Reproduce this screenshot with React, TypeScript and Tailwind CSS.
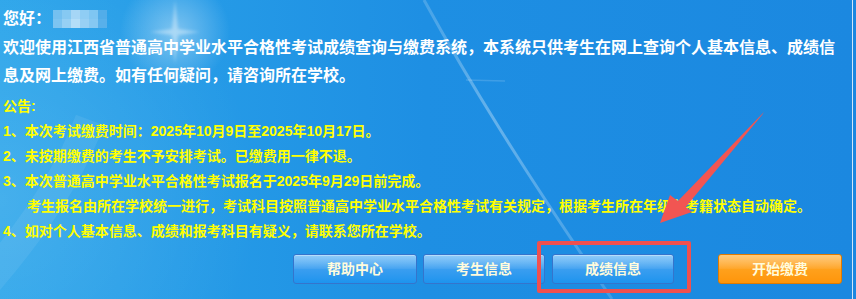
import React from 'react';

const FONT = { fontFamily: '"Liberation Sans", "Noto Sans CJK SC", sans-serif' };

const notices = [
  { text: '1、本次考试缴费时间：2025年10月9日至2025年10月17日。' },
  { text: '2、未按期缴费的考生不予安排考试。已缴费用一律不退。' },
  { text: '3、本次普通高中学业水平合格性考试报名于2025年9月29日前完成。' },
  { text: '考生报名由所在学校统一进行，考试科目按照普通高中学业水平合格性考试有关规定，根据考生所在年级和考籍状态自动确定。', indent: true },
  { text: '4、如对个人基本信息、成绩和报考科目有疑义，请联系您所在学校。' },
];

// pixelated, blurred name placeholder
const blurCells = [
  ['#74c0f0', '#86c9f2', '#a6d6f6', '#8fcdf4', '#7fc6f2', '#52ade9'],
  ['#7cc4f1', '#96d0f4', '#b4def8', '#98d0f4', '#86c8f2', '#58b0ea'],
];

const BlueButton: React.FC<{ label: string; className?: string }> = ({ label, className }) => (
  <button
    className={`relative h-[30px] w-[122px] overflow-hidden rounded-[3px] border border-[#3574cc] bg-gradient-to-b from-[#6cbcf7] via-[#3a9ef0] to-[#1c94ee] text-[14px] font-bold text-[#fffbdc] shadow-[inset_0_1px_0_rgba(255,255,255,0.35)] ${className ?? ''}`}
  >
    <span className="absolute inset-x-0 top-0 h-1/2 bg-gradient-to-b from-white/25 to-white/5" />
    <span className="relative">{label}</span>
  </button>
);

export default function App() {
  return (
    <div className="flex h-[299px] w-[856px] overflow-hidden bg-[#1b87e0]" style={FONT}>
      <div className="relative h-full w-[853px] border-r border-[#cfe6f9] bg-gradient-to-r from-[#2ca5ea] via-[#1e8fe3] to-[#1b88e0]">
        {/* background decorations */}
        <svg className="pointer-events-none absolute inset-0" width="852" height="299">
          <defs>
            <radialGradient id="glow" cx="175" cy="32" r="55" gradientUnits="userSpaceOnUse">
              <stop offset="0" stopColor="#ffffff" stopOpacity="0.4" />
              <stop offset="1" stopColor="#ffffff" stopOpacity="0" />
            </radialGradient>
            <radialGradient id="leftglow" cx="0" cy="200" r="260" gradientUnits="userSpaceOnUse">
              <stop offset="0" stopColor="#ffffff" stopOpacity="0.12" />
              <stop offset="1" stopColor="#ffffff" stopOpacity="0" />
            </radialGradient>
            <linearGradient id="streak" x1="0" y1="0" x2="0" y2="1">
              <stop offset="0" stopColor="#ffffff" stopOpacity="0.18" />
              <stop offset="0.4" stopColor="#ffffff" stopOpacity="0.32" />
              <stop offset="1" stopColor="#ffffff" stopOpacity="0.15" />
            </linearGradient>
            <filter id="soft" x="-50%" y="-50%" width="200%" height="200%">
              <feGaussianBlur stdDeviation="1.5" />
            </filter>
          </defs>
          <rect x="0" y="0" width="852" height="299" fill="url(#leftglow)" />
          <circle cx="175" cy="32" r="55" fill="url(#glow)" />
          <path
            d="M175 0 L178 29 L200 32 L178 35 L175 64 L172 35 L150 32 L172 29 Z"
            fill="#ffffff"
            opacity="0.35"
            filter="url(#soft)"
          />
          <path d="M424 0 C468 80 520 165 612 299" stroke="url(#streak)" strokeWidth="3" fill="none" />
          <path d="M466 80 L505 81" stroke="#ffffff" strokeOpacity="0.15" strokeWidth="1.5" />
          <path d="M-20 290 Q60 200 90 120" stroke="#ffffff" strokeOpacity="0.07" strokeWidth="30" fill="none" />
        </svg>

        <div className="relative pl-[3px]">
          <div className="mt-[5px] flex h-[28px] items-center text-[16px] font-bold text-white">
            <span>您好：</span>
            <span className="ml-[2px] flex flex-col">
              {blurCells.map((row, i) => (
                <span key={i} className="flex">
                  {row.map((c, j) => (
                    <span key={j} className="h-[9px] w-[9px]" style={{ background: c }} />
                  ))}
                </span>
              ))}
            </span>
          </div>
          <p className="mt-[1px] pr-[14px] text-[16px] font-bold leading-[28px] text-white">
            欢迎使用江西省普通高中学业水平合格性考试成绩查询与缴费系统，本系统只供考生在网上查询个人基本信息、成绩信息及网上缴费。如有任何疑问，请咨询所在学校。
          </p>

          <div className="mt-[4px] text-[14px] font-bold leading-[25px] text-[#ffff00]">
            <div>公告:</div>
            {notices.map((n, i) => (
              <div key={i} className={n.indent ? 'pl-[24px]' : ''}>
                {n.text}
              </div>
            ))}
          </div>

          <div className="mt-[10px] flex">
            <BlueButton label="帮助中心" className="ml-[290px] w-[124px]" />
            <BlueButton label="考生信息" className="ml-[6px]" />
            <BlueButton label="成绩信息" className="ml-[7px]" />
            <button className="relative ml-[44px] h-[30px] w-[124px] overflow-hidden rounded-[3px] border border-[#e07a00] bg-gradient-to-b from-[#ffb94e] via-[#ffa11c] to-[#ff9508] text-[14px] font-bold text-[#fffbdc]">
              <span className="absolute inset-x-0 top-0 h-1/2 bg-gradient-to-b from-white/25 to-white/5" />
              <span className="relative">开始缴费</span>
            </button>
          </div>
        </div>

        {/* annotation overlay: red frame and arrow */}
        <div className="pointer-events-none absolute left-[537px] top-[241px] h-[52px] w-[154px] rounded-[2px] border-[4px] border-[#f0504f]" />
        <svg className="pointer-events-none absolute inset-0" width="852" height="299">
          <path d="M764 112 L762 115 L684 209 L676 203 Z" fill="#f25552" />
          <path d="M660 223 L670 195 L692 212 Z" fill="#f25552" />
        </svg>
      </div>
    </div>
  );
}
